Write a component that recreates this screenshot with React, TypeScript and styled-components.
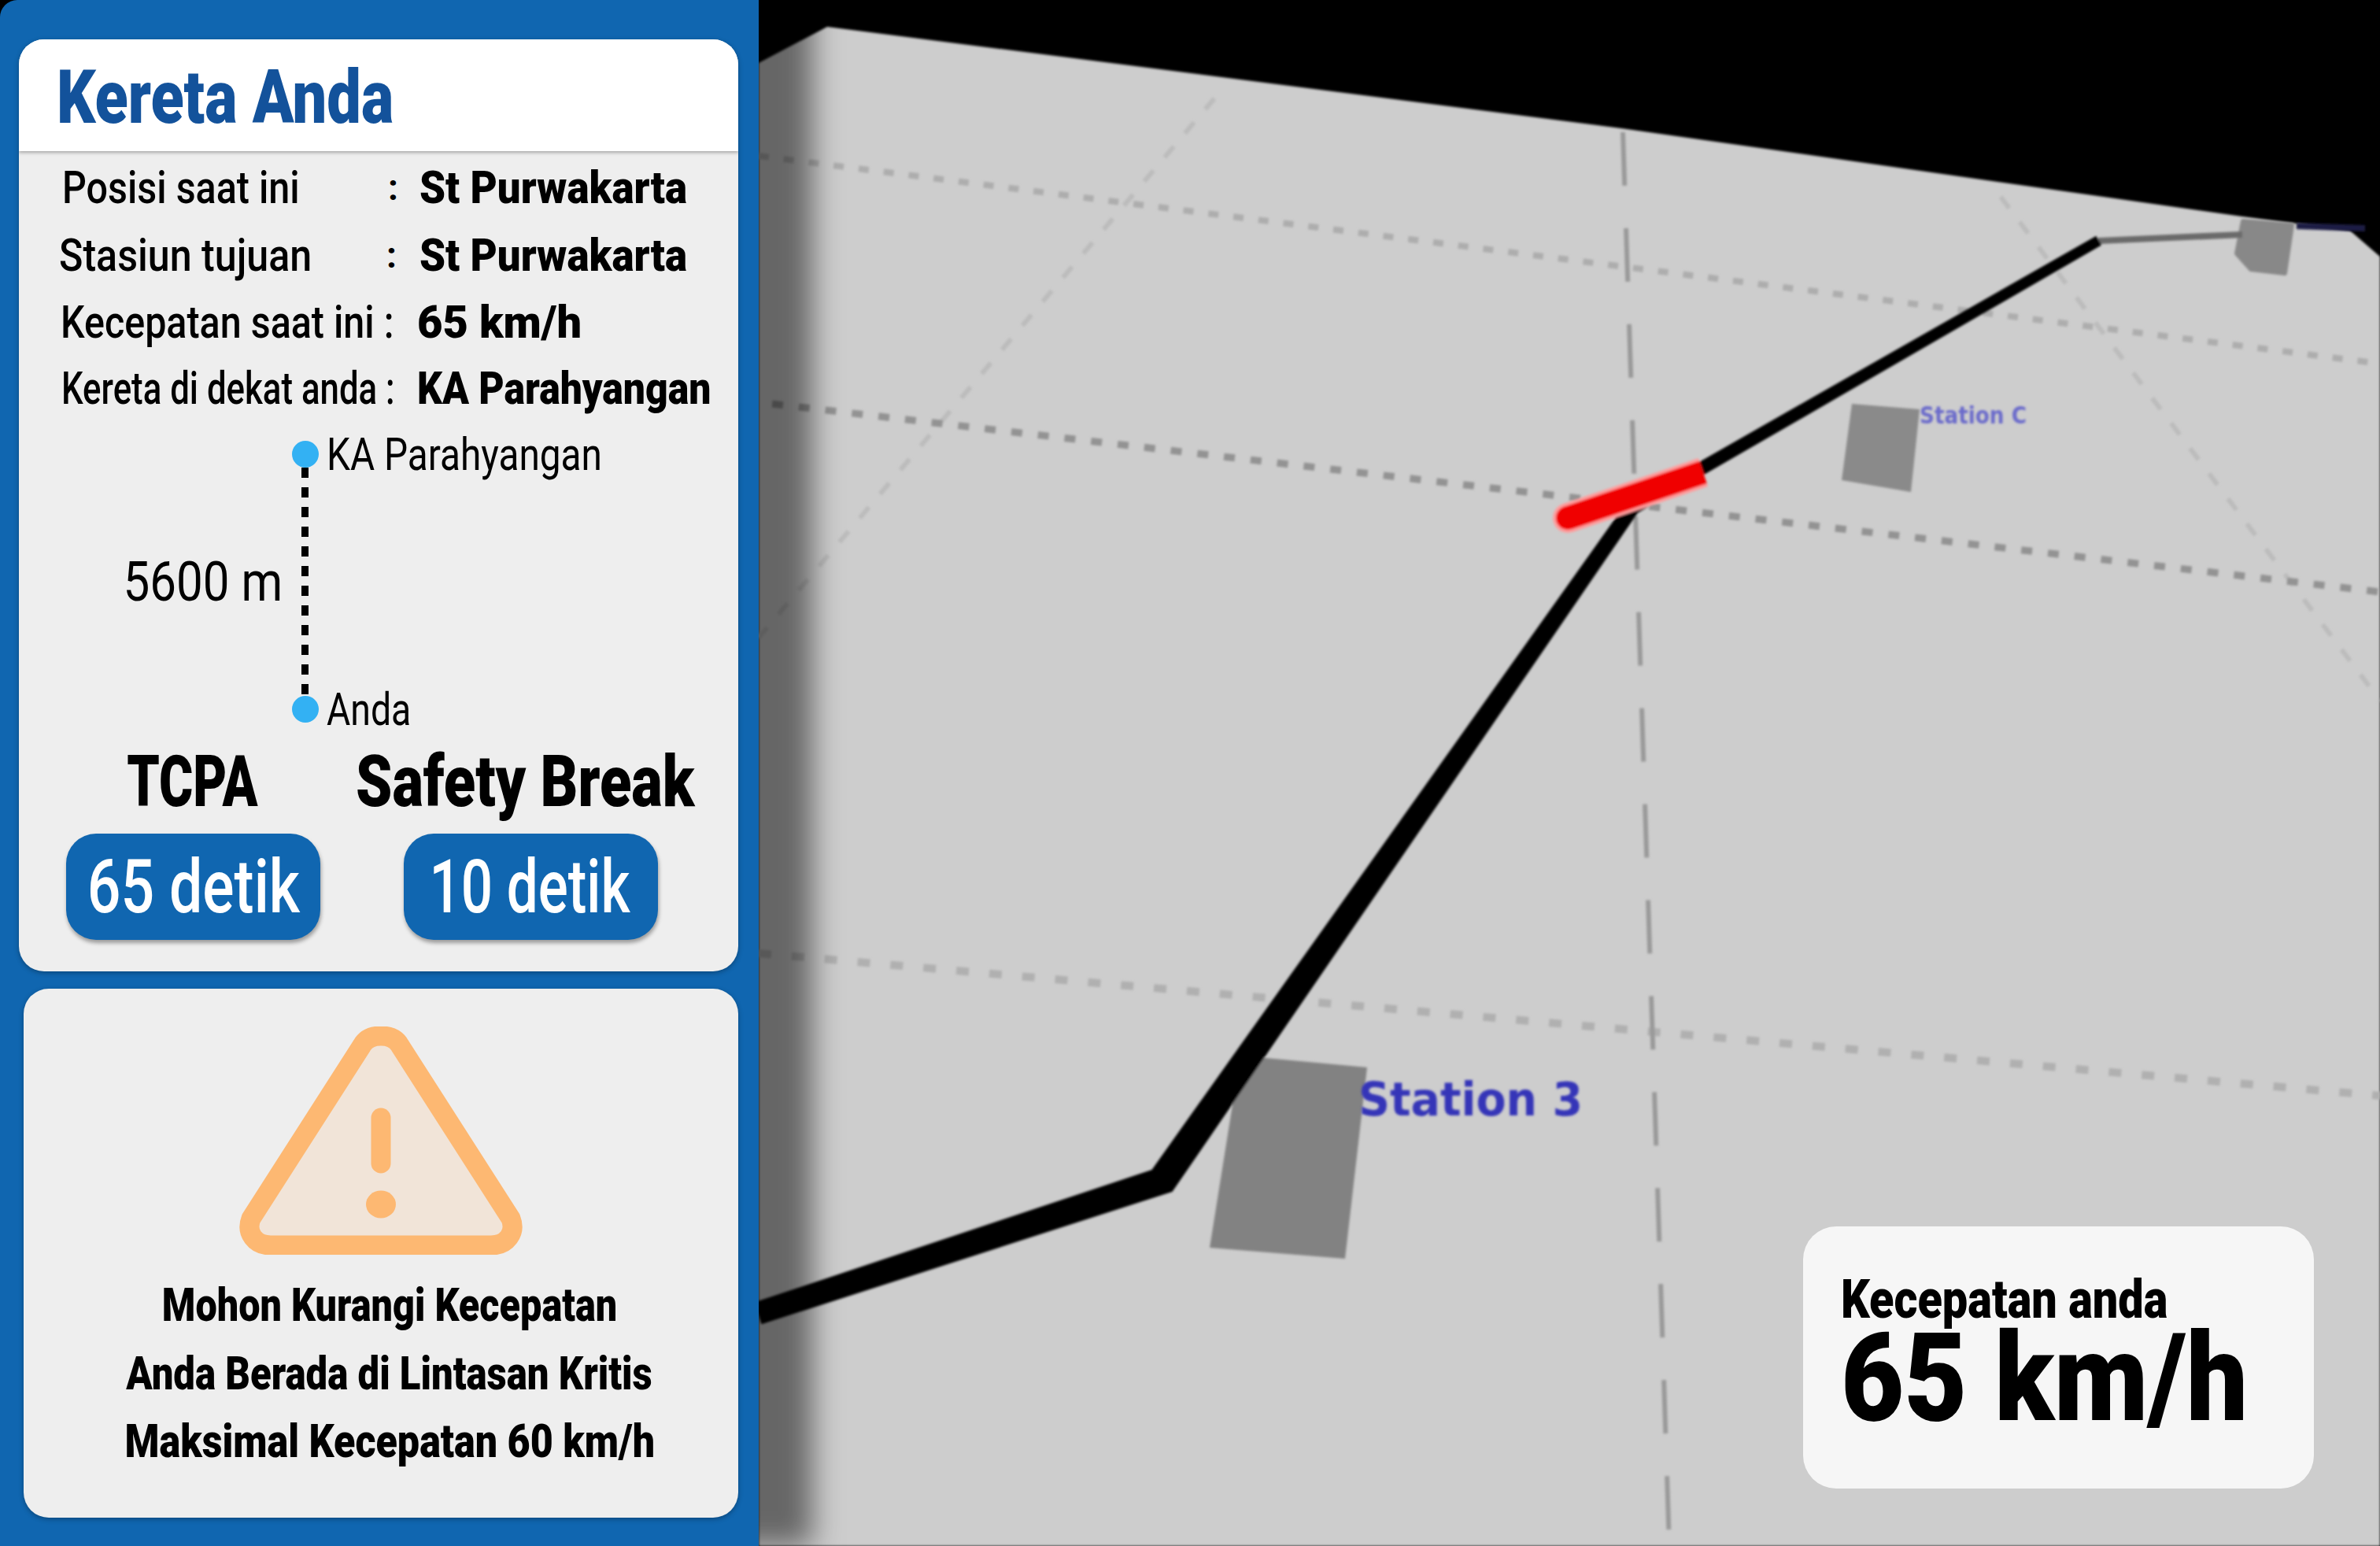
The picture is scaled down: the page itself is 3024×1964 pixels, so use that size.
import React from "react";
import styled, { createGlobalStyle } from "styled-components";

const Global = createGlobalStyle`
  html, body { margin: 0; padding: 0; background: #000; }
  body { font-family: Roboto, "Liberation Sans", sans-serif; color: #000; }
`;

const Page = styled.div`
  display: flex;
  width: 3024px;
  height: 1964px;
  overflow: hidden;
  background: #000;
`;

const Sidebar = styled.aside`
  position: relative;
  z-index: 2;
  flex: 0 0 964px;
  width: 964px;
  min-width: 0;
  box-sizing: border-box;
  display: flex;
  flex-direction: column;
  padding: 50px 26px 0 24px;
  background: #1066b0;
  border-top-left-radius: 22px;
  box-shadow: 68px 0 36px 0 rgba(0, 0, 0, 0.5);
`;

const Squeezed = styled.span<{ $sx: number; $origin?: string }>`
  display: inline-block;
  white-space: nowrap;
  transform: scaleX(${(p) => p.$sx});
  transform-origin: ${(p) => p.$origin ?? "left"} center;
`;

const InfoCard = styled.section`
  height: 1184px;
  min-width: 0;
  display: flex;
  flex-direction: column;
  border-radius: 32px;
  background: #eeeeee;
  box-shadow: 0 2px 6px rgba(0, 0, 0, 0.3);
  overflow: hidden;
`;

const CardHeader = styled.header`
  flex: 0 0 142px;
  display: flex;
  align-items: center;
  padding: 6px 0 0 48px;
  box-sizing: border-box;
  background: #ffffff;
  box-shadow: 0 2px 4px rgba(0, 0, 0, 0.3);
`;

const Title = styled(Squeezed)`
  font-size: 94px;
  font-weight: 900;
  line-height: 1;
  color: #13529b;
`;

const Rows = styled.div`
  padding: 3px 0 0 51px;
`;

const Row = styled.div<{ $h: number }>`
  display: grid;
  grid-template-columns: 416px 39px 1fr;
  align-items: center;
  height: ${(p) => p.$h}px;
`;

const RowLabel = styled(Squeezed)<{ $indent: number }>`
  margin-left: ${(p) => p.$indent}px;
  font-size: 58px;
  font-weight: 500;
`;

const Colon = styled.span<{ $pad: number }>`
  padding-left: ${(p) => p.$pad}px;
  font-size: 46px;
  font-weight: 700;
`;

const RowValue = styled(Squeezed)<{ $indent: number }>`
  margin-left: ${(p) => p.$indent}px;
  font-size: 58px;
  font-weight: 900;
`;

const Timeline = styled.div`
  display: grid;
  grid-template-columns: 347px 34px 1fr;
  height: 383px;
  padding: 25px 0 0 0;
  box-sizing: border-box;
`;

const Distance = styled(Squeezed)`
  justify-self: end;
  align-self: center;
  margin-right: 12px;
  font-size: 70px;
`;

const Rail = styled.div`
  display: flex;
  flex-direction: column;
  align-items: center;
`;

const RailDot = styled.span`
  flex: 0 0 34px;
  width: 34px;
  border-radius: 50%;
  background: #33b1f3;
`;

const RailDash = styled.span`
  flex: 1;
  width: 9px;
  margin-left: -2px;
  background: repeating-linear-gradient(#000 0 13px, transparent 13px 25px);
`;

const RailLabels = styled.div`
  display: flex;
  flex-direction: column;
  justify-content: space-between;
  padding-left: 10px;
`;

const RailLabel = styled(Squeezed)`
  height: 34px;
  line-height: 34px;
  font-size: 58px;
`;

const Stats = styled.div`
  display: grid;
  grid-template-columns: 323px 323px;
  column-gap: 106px;
  padding: 36px 0 0 60px;
`;

const Stat = styled.div`
  display: flex;
  flex-direction: column;
  align-items: center;
`;

const StatTitle = styled(Squeezed)<{ $shift: number }>`
  height: 80px;
  line-height: 80px;
  margin-right: ${(p) => p.$shift}px;
  font-size: 90px;
  font-weight: 900;
`;

const StatPill = styled.div`
  margin-top: 25px;
  width: 323px;
  height: 135px;
  display: flex;
  align-items: center;
  justify-content: center;
  border-radius: 38px;
  background: #1066b0;
  box-shadow: 1px 4px 5px rgba(0, 0, 0, 0.35);
`;

const PillText = styled(Squeezed)<{ $shift: number }>`
  margin-right: ${(p) => p.$shift}px;
  font-size: 94px;
  font-weight: 500;
  line-height: 1;
  color: #ffffff;
`;

const WarningCard = styled.section`
  margin: 22px 0 0 6px;
  height: 672px;
  min-width: 0;
  box-sizing: border-box;
  display: flex;
  flex-direction: column;
  align-items: center;
  padding-top: 48px;
  border-radius: 32px;
  background: #eeeeee;
  box-shadow: 0 2px 6px rgba(0, 0, 0, 0.3);
`;

const WarningText = styled.div`
  margin-top: 21px;
  padding-left: 22px;
  display: flex;
  flex-direction: column;
  align-items: center;
`;

const WarningLine = styled(Squeezed)`
  height: 86.5px;
  line-height: 86.5px;
  font-size: 60px;
  font-weight: 900;
`;

const MapArea = styled.main`
  position: relative;
  flex: 1;
  min-width: 0;
  background: #000;
`;

const MapDrawing = styled.svg`
  display: block;
`;

const SpeedCard = styled.div`
  position: absolute;
  right: 84px;
  bottom: 73px;
  width: 649px;
  height: 333px;
  box-sizing: border-box;
  padding: 58px 0 0 48px;
  display: flex;
  flex-direction: column;
  border-radius: 42px;
  background: #f6f6f6;
`;

const SpeedLabel = styled(Squeezed)`
  height: 70px;
  line-height: 70px;
  font-size: 69px;
  font-weight: 900;
`;

const SpeedValue = styled(Squeezed)`
  height: 130px;
  line-height: 130px;
  font-size: 155px;
  font-weight: 900;
`;

const Warning = () => (
  <svg width="360" height="290" viewBox="0 0 360 290" aria-hidden="true">
    <path
      d="M156 24C161 15 170 12 180 12C190 12 199 15 204 24L345 244C352 262 340 278 320 278L40 278C20 278 8 262 15 244Z"
      fill="#f1e4d8"
      stroke="#fdb872"
      strokeWidth="25"
      strokeLinejoin="round"
    />
    <line x1="180" y1="116" x2="180" y2="174" stroke="#fdb872" strokeWidth="25" strokeLinecap="round" />
    <ellipse cx="180" cy="226" rx="19" ry="17.5" fill="#fdb872" />
  </svg>
);

const RailwayMap = () => (
  <MapDrawing width="2060" height="1964" viewBox="964 0 2060 1964" aria-hidden="true">
    <defs>
      <filter id="soft" x="-5%" y="-5%" width="110%" height="110%">
        <feGaussianBlur stdDeviation="1.6" />
      </filter>
      <filter id="softer" x="-20%" y="-20%" width="140%" height="140%">
        <feGaussianBlur stdDeviation="1.4" />
      </filter>
    </defs>
    <polygon
      points="964,80 1051,34 2060,163 2849,275 2986,293 3024,326 3024,1964 964,1964"
      fill="#cdcdcd"
      filter="url(#soft)"
    />
    <g fill="none" filter="url(#soft)">
      <path d="M1543 125L964 810" stroke="#bcbcbc" strokeWidth="6" strokeDasharray="18 22" />
      <path d="M2542 250L3024 890" stroke="#bcbcbc" strokeWidth="6" strokeDasharray="18 22" />
      <path d="M964 198L3024 462" stroke="#adadad" strokeWidth="8" strokeDasharray="13 19" />
      <path d="M981 513L3024 752" stroke="#939393" strokeWidth="9" strokeDasharray="14 20" />
      <path d="M964 1211L3024 1392" stroke="#b0b0b0" strokeWidth="10" strokeDasharray="16 26" />
      <path d="M2062 168L2121 1964" stroke="#9a9a9a" strokeWidth="6" strokeDasharray="68 54" />
    </g>
    <g filter="url(#soft)">
      <polygon points="1576,1341 1737,1356 1709,1599 1537,1585" fill="#828282" />
      <polygon points="2353,513 2439,520 2428,625 2340,610" fill="#8a8a8a" />
      <polygon
        points="2850,281 2912,286 2903,347 2860,342 2842,322"
        fill="#888888"
        stroke="#888888"
        strokeWidth="6"
        strokeLinejoin="round"
      />
      <path d="M2666 306L2849 298" stroke="#6a6a6a" strokeWidth="8" fill="none" />
      <path d="M2918 287L3005 290" stroke="#1c1c44" strokeWidth="8" fill="none" />
      <polygon
        points="960,1655 1464,1487 2066,641 2663,301 2669,311 2080,651 1489,1513 968,1681"
        fill="#000"
        stroke="#000"
        strokeWidth="2"
        strokeLinejoin="round"
      />
      <path d="M1992 658L2164 600" stroke="#ff9c9c" strokeWidth="38" fill="none" />
      <circle cx="1992" cy="658" r="19" fill="#ff9c9c" />
      <path d="M1992 658L2164 600" stroke="#f00000" strokeWidth="30" fill="none" />
      <circle cx="1992" cy="658" r="15" fill="#f00000" />
    </g>
    <g filter="url(#softer)" fontFamily="'DejaVu Sans', sans-serif" fontWeight="700">
      <text x="1726" y="1417" fontSize="58" fill="#3434b8" textLength="285" lengthAdjust="spacingAndGlyphs">
        Station 3
      </text>
      <text x="2439" y="538" fontSize="30" fill="#6a6acb" textLength="136" lengthAdjust="spacingAndGlyphs">
        Station C
      </text>
    </g>
  </MapDrawing>
);

export default function App() {
  return (
    <Page>
      <Global />
      <Sidebar>
        <InfoCard>
          <CardHeader>
            <Title $sx={0.824}>Kereta Anda</Title>
          </CardHeader>
          <Rows>
            <Row $h={85}>
              <RowLabel $sx={0.835} $indent={4}>Posisi saat ini</RowLabel>
              <Colon $pad={2}>:</Colon>
              <RowValue $sx={0.911} $indent={3}>St Purwakarta</RowValue>
            </Row>
            <Row $h={87}>
              <RowLabel $sx={0.865} $indent={0}>Stasiun tujuan</RowLabel>
              <Colon $pad={0}>:</Colon>
              <RowValue $sx={0.911} $indent={3}>St Purwakarta</RowValue>
            </Row>
            <Row $h={83}>
              <RowLabel $sx={0.835} $indent={2}>Kecepatan saat ini :</RowLabel>
              <span />
              <RowValue $sx={0.966} $indent={0}>65 km/h</RowValue>
            </Row>
            <Row $h={85}>
              <RowLabel $sx={0.755} $indent={3}>Kereta di dekat anda :</RowLabel>
              <span />
              <RowValue $sx={0.86} $indent={0}>KA Parahyangan</RowValue>
            </Row>
          </Rows>
          <Timeline>
            <Distance $sx={0.858} $origin="right">5600 m</Distance>
            <Rail>
              <RailDot />
              <RailDash />
              <RailDot />
            </Rail>
            <RailLabels>
              <RailLabel $sx={0.823}>KA Parahyangan</RailLabel>
              <RailLabel $sx={0.8}>Anda</RailLabel>
            </RailLabels>
          </Timeline>
          <Stats>
            <Stat>
              <StatTitle $sx={0.733} $origin="center" $shift={2}>TCPA</StatTitle>
              <StatPill>
                <PillText $sx={0.8} $origin="center" $shift={0}>65 detik</PillText>
              </StatPill>
            </Stat>
            <Stat>
              <StatTitle $sx={0.824} $origin="center" $shift={14}>Safety Break</StatTitle>
              <StatPill>
                <PillText $sx={0.755} $origin="center" $shift={4}>10 detik</PillText>
              </StatPill>
            </Stat>
          </Stats>
        </InfoCard>
        <WarningCard>
          <Warning />
          <WarningText>
            <WarningLine $sx={0.81} $origin="center">Mohon Kurangi Kecepatan</WarningLine>
            <WarningLine $sx={0.818} $origin="center">Anda Berada di Lintasan Kritis</WarningLine>
            <WarningLine $sx={0.837} $origin="center">Maksimal Kecepatan 60 km/h</WarningLine>
          </WarningText>
        </WarningCard>
      </Sidebar>
      <MapArea>
        <RailwayMap />
        <SpeedCard>
          <SpeedLabel $sx={0.835}>Kecepatan anda</SpeedLabel>
          <SpeedValue $sx={0.894}>65 km/h</SpeedValue>
        </SpeedCard>
      </MapArea>
    </Page>
  );
}
